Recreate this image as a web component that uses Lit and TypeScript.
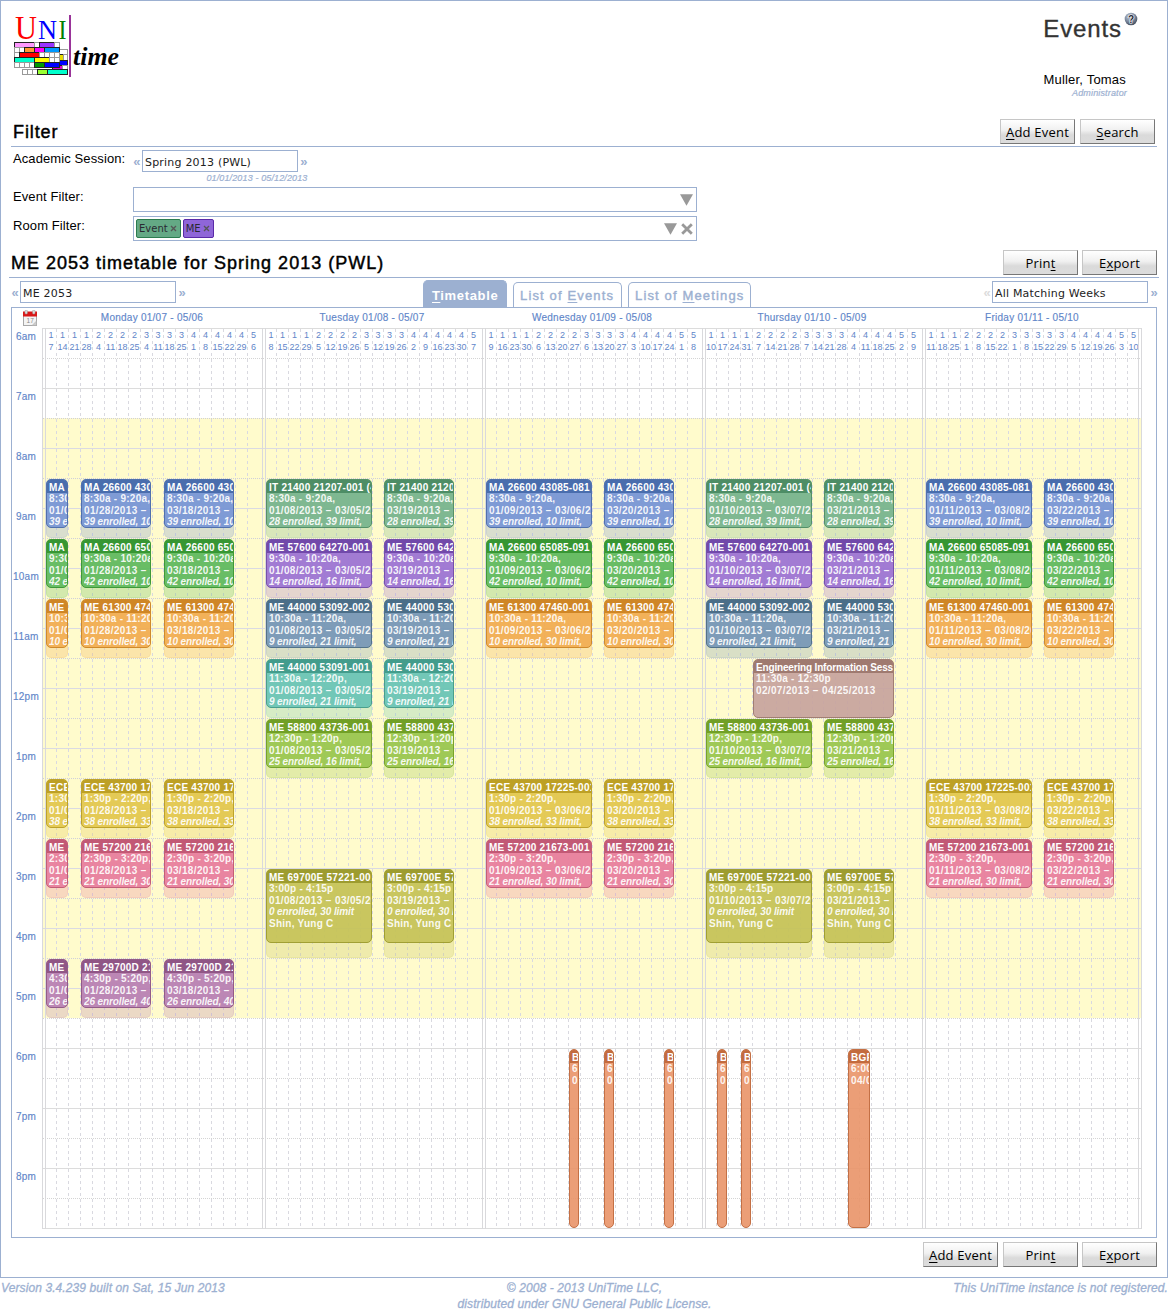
import { LitElement, html, svg, css, nothing } from "lit";
import { customElement, property } from "lit/decorators.js";

type Rgb = [number, number, number];
interface Tone { body: string; head: string; }
interface Course {
  title: string;
  tone: keyof typeof TONES;
  start: number;
  length: number;
  rest: number;
  time: string;
  seats?: string;
  person?: string;
  days: string;
}
interface Block {
  title: string;
  tone: keyof typeof TONES;
  start: number;
  length: number;
  rest: number;
  week: number;
  weeks: number;
  time: string;
  range: string;
  seats?: string;
  person?: string;
  prose?: boolean;
}

const TONES = {
  blue: { body: "#829dd5", head: "#5071ad" },
  green: { body: "#6dbf68", head: "#3f9938" },
  orange: { body: "#f2b35c", head: "#cf8a2c" },
  sage: { body: "#82ba93", head: "#549068" },
  purple: { body: "#a47fd3", head: "#7650aa" },
  slate: { body: "#819fb8", head: "#527389" },
  teal: { body: "#76c9b7", head: "#4a9f8c" },
  lime: { body: "#a1ca5a", head: "#76a22c" },
  gold: { body: "#e4cb5a", head: "#bda22b" },
  pink: { body: "#e989a1", head: "#c35e77" },
  olive: { body: "#cac862", head: "#a09f34" },
  mauve: { body: "#be8ab5", head: "#935b88" },
  brown: { body: "#cbaaa1", head: "#a17e73" },
  coral: { body: "#eb9f77", head: "#c47045" },
} satisfies Record<string, Tone>;

const WORK_HOURS: Rgb = [255, 251, 204];
const OFF_HOURS: Rgb = [255, 255, 255];

const rgb = (hex: string): Rgb => [1, 3, 5].map((i) => parseInt(hex.slice(i, i + 2), 16)) as Rgb;

/** Translucent colour that reads as `hex` once it is laid over `base`. */
function over(hex: string, alpha: number, base: Rgb): string {
  const c = rgb(hex).map((v, i) => Math.max(0, Math.min(255, Math.round((v - (1 - alpha) * base[i]) / alpha))));
  return `rgba(${c.join(",")},${alpha})`;
}

const DAYS = ["Monday", "Tuesday", "Wednesday", "Thursday", "Friday"];
const CODES = "MTWRF";
const WEEKS = 18;

const dateOf = (day: number, week: number) => new Date(2013, 0, 7 + day + week * 7);
const two = (n: number) => String(n).padStart(2, "0");
const short = (d: Date) => `${two(d.getMonth() + 1)}/${two(d.getDate())}`;
const long = (d: Date) => `${short(d)}/${d.getFullYear()}`;

const at = (h: number, m = 0) => (h - 6) * 60 + m;

const COURSES: Course[] = [
  { title: "MA 26600 43085-081", tone: "blue", start: at(8, 30), length: 50, rest: 10, time: "8:30a - 9:20a,", seats: "39 enrolled, 10 limit,", days: "MWF" },
  { title: "MA 26600 65085-091", tone: "green", start: at(9, 30), length: 50, rest: 10, time: "9:30a - 10:20a,", seats: "42 enrolled, 10 limit,", days: "MWF" },
  { title: "ME 61300 47460-001", tone: "orange", start: at(10, 30), length: 50, rest: 10, time: "10:30a - 11:20a,", seats: "10 enrolled, 30 limit,", days: "MWF" },
  { title: "IT 21400 21207-001 (4)", tone: "sage", start: at(8, 30), length: 50, rest: 10, time: "8:30a - 9:20a,", seats: "28 enrolled, 39 limit,", days: "TR" },
  { title: "ME 57600 64270-001", tone: "purple", start: at(9, 30), length: 50, rest: 10, time: "9:30a - 10:20a,", seats: "14 enrolled, 16 limit,", days: "TR" },
  { title: "ME 44000 53092-002", tone: "slate", start: at(10, 30), length: 50, rest: 10, time: "10:30a - 11:20a,", seats: "9 enrolled, 21 limit,", days: "TR" },
  { title: "ME 44000 53091-001", tone: "teal", start: at(11, 30), length: 50, rest: 10, time: "11:30a - 12:20p,", seats: "9 enrolled, 21 limit,", days: "T" },
  { title: "ME 58800 43736-001", tone: "lime", start: at(12, 30), length: 50, rest: 10, time: "12:30p - 1:20p,", seats: "25 enrolled, 16 limit,", days: "TR" },
  { title: "ECE 43700 17225-001", tone: "gold", start: at(13, 30), length: 50, rest: 10, time: "1:30p - 2:20p,", seats: "38 enrolled, 33 limit,", days: "MWF" },
  { title: "ME 57200 21673-001", tone: "pink", start: at(14, 30), length: 50, rest: 10, time: "2:30p - 3:20p,", seats: "21 enrolled, 30 limit,", days: "MWF" },
  { title: "ME 69700E 57221-001", tone: "olive", start: at(15), length: 75, rest: 15, time: "3:00p - 4:15p", seats: "0 enrolled, 30 limit", person: "Shin, Yung C", days: "TR" },
  { title: "ME 29700D 21640-001", tone: "mauve", start: at(16, 30), length: 50, rest: 10, time: "4:30p - 5:20p,", seats: "26 enrolled, 40 limit,", days: "M" },
];

function blocksFor(day: number): Block[] {
  const spans = day === 0 ? [[0, 2], [3, 6], [10, 6]] : [[0, 9], [10, 6]];
  const out: Block[] = [];
  for (const c of COURSES) {
    if (!c.days.includes(CODES[day])) continue;
    for (const [week, weeks] of spans) {
      const range = `${long(dateOf(day, week))} − ${long(dateOf(day, week + weeks - 1))}`;
      out.push({ ...c, week, weeks, range });
    }
  }
  if (day === 3) {
    out.push({ title: "Engineering Information Session", tone: "brown", start: at(11, 30), length: 60, rest: 0, week: 4, weeks: 12, time: "11:30a - 12:30p", range: "02/07/2013 − 04/25/2013", prose: true });
  }
  const evenings: Record<number, number[][]> = { 2: [[7, 1], [10, 1], [15, 1]], 3: [[1, 1], [3, 1], [12, 2]] };
  for (const [week, weeks] of evenings[day] ?? []) {
    out.push({ title: "BGR", tone: "coral", start: at(18), length: 180, rest: 0, week, weeks, time: "6:00p", range: long(dateOf(day, week)) });
  }
  return out;
}

@customElement("unitime-logo")
class UnitimeLogo extends LitElement {
  static styles = css`
    :host { display: block; width: 110px; height: 66px; margin-top: 1px; }
    svg { display: block; }
    .serif { font-family: "Liberation Serif", serif; }
    .script { font-family: "Liberation Serif", serif; font-style: italic; font-weight: bold; font-size: 25px; }
  `;
  render() {
    const back: [number, number, number, number, string][] = [
      [45, 34, 8, 5, "#fff"], [45, 39, 4, 6, "#e8dc00"], [49, 39, 4, 6, "#fff"], [45, 45, 8, 5, "#0000ff"],
      [38, 50, 10, 5, "#e800c8"], [48, 50, 5, 5, "#fff"],
      [8, 54, 5, 5, "#fff"], [13, 54, 5, 5, "#fff"], [18, 54, 5, 5, "#fff"], [23, 54, 10, 5, "#99ff33"], [33, 54, 20, 5, "#00ffcc"],
    ];
    const front: [number, number, number, number, string][] = [
      [0, 27, 20, 5, "#ff99ff"], [20, 27, 5, 5, "#fff"], [25, 27, 15, 5, "#9933ff"], [40, 27, 5, 5, "#fff"],
      [0, 32, 5, 5, "#fff"], [5, 32, 5, 5, "#fff"], [10, 32, 10, 5, "#ff9933"], [20, 32, 10, 5, "#ff00ff"], [30, 32, 15, 5, "#0099ff"],
      [0, 37, 5, 5, "#fff"], [5, 37, 20, 5, "#ff0000"], [25, 37, 5, 5, "#fff"], [30, 37, 5, 5, "#fff"], [35, 37, 5, 5, "#fff"], [40, 37, 5, 5, "#fff"],
      [0, 42, 20, 5, "#00ffcc"], [20, 42, 15, 5, "#ffff00"], [35, 42, 5, 5, "#fff"], [40, 42, 5, 5, "#fff"],
      [0, 47, 5, 5, "#fff"], [5, 47, 5, 5, "#fff"], [10, 47, 5, 5, "#fff"], [15, 47, 5, 5, "#fff"], [20, 47, 10, 5, "#009900"], [30, 47, 15, 5, "#0000ff"],
    ];
    const cell = ([x, y, w, h, fill]: [number, number, number, number, string]) =>
      svg`<rect x=${x + 0.5} y=${y + 0.5} width=${w} height=${h} fill=${fill} stroke=${fill === "#fff" ? "#999" : "#222"} stroke-width="1" />`;
    return html`<svg width="110" height="66" viewBox="0 0 110 66">
      <text class="serif" x="1" y="24" font-size="34" textLength="22" lengthAdjust="spacingAndGlyphs" fill="#ff0000">U</text>
      <text class="serif" x="24" y="24" font-size="27" textLength="19" lengthAdjust="spacingAndGlyphs" fill="#0000ff">N</text>
      <text class="serif" x="44.5" y="24" font-size="27" textLength="8" lengthAdjust="spacingAndGlyphs" fill="#008000">I</text>
      ${back.map(cell)}
      ${svg`<rect x="0.5" y="27.5" width="45" height="25" fill="#fff" />`}
      ${front.map(cell)}
      <rect x="55" y="0" width="2" height="62" fill="#993399" />
      <text class="script" x="59" y="50" textLength="46" lengthAdjust="spacingAndGlyphs">time</text>
    </svg>`;
  }
}

@customElement("push-button")
class PushButton extends LitElement {
  @property() label = "";
  @property({ attribute: "access-key" }) key = "";
  static styles = css`
    :host { display: block; }
    .button {
      box-sizing: border-box; width: 75px; height: 25px; padding: 0; display: block;
      border: 1px solid; border-color: #c6c6c6 #777 #777 #c6c6c6;
      background: linear-gradient(#ffffff, #f0f0f0 45%, #dadada 65%, #dcdcdc);
      font: 13px/24px "Open Sans", sans-serif; letter-spacing: 0.2px; color: #000; text-align: center; white-space: nowrap;
    }
    .key { text-decoration: underline; text-underline-offset: 2px; }
  `;
  render() {
    const i = this.label.indexOf(this.key);
    return html`<button class="button">${this.label.slice(0, i)}<span class="key">${this.key}</span>${this.label.slice(i + this.key.length)}</button>`;
  }
}

@customElement("step-select")
class StepSelect extends LitElement {
  @property() value = "";
  @property({ type: Boolean }) first = false;
  static styles = css`
    :host { display: flex; align-items: center; height: 22px; font-family: "Liberation Sans", sans-serif; }
    .step { width: 8px; padding-top: 2px; color: #9cb0d1; font: bold 13px/20px "Liberation Sans", sans-serif; text-align: center; }
    .step.off { color: #dcdcdc; }
    .field {
      box-sizing: border-box; width: 156px; height: 22px; margin: 0 2px 0 1px; padding-left: 2px; border: 1px solid #9cb0d1;
      font: 11px/23px "DejaVu Sans", sans-serif; letter-spacing: 0.2px; color: #222; white-space: nowrap;
    }
  `;
  render() {
    return html`<span class="step ${this.first ? "off" : ""}">«</span>
      <div class="field">${this.value}</div>
      <span class="step">»</span>`;
  }
}

@customElement("event-block")
class EventBlock extends LitElement {
  @property({ attribute: false }) block!: Block;
  static styles = css`
    :host { display: block; min-width: 0; min-height: 0; height: 100%; }
    .slot { box-sizing: border-box; height: 100%; border-radius: 5px; }
    .event {
      box-sizing: border-box; border: 1px solid; border-radius: 5px; overflow: hidden;
      font: bold 10px/11.6px "Liberation Sans", sans-serif; letter-spacing: 0.25px; color: rgba(255, 255, 255, 0.92); white-space: nowrap;
    }
    .title { height: 13px; line-height: 15px; padding-left: 2px; overflow: hidden; color: #fff; }
    .title.prose { letter-spacing: -0.17px; }
    .text { margin-left: 2px; overflow: hidden; }
    .range { letter-spacing: 0.35px; }
    .seats { font-style: italic; letter-spacing: -0.12px; }
  `;
  render() {
    const b = this.block;
    const tone = TONES[b.tone];
    const base = b.start >= at(17, 30) ? OFF_HOURS : WORK_HOURS;
    const [r, g, bl] = rgb(tone.body);
    const shade = b.rest ? `background:rgba(${r},${g},${bl},.3);box-shadow:inset 0 0 0 1px rgba(${r},${g},${bl},.16)` : "";
    const head = over(tone.head, 0.95, base);
    return html`<div class="slot" style=${shade}>
      <div class="event" style="height:${b.length - 1}px;border-color:${tone.head};background:${over(tone.body, 0.9, base)}">
        <div class="title ${b.prose ? "prose" : ""}" style="background:${head}">${b.title}</div>
        <div class="text">${b.time}</div>
        <div class="text range">${b.range}</div>
        ${b.seats ? html`<div class="text seats">${b.seats}</div>` : nothing}
        ${b.person ? html`<div class="text">${b.person}</div>` : nothing}
      </div>
    </div>`;
  }
}

@customElement("week-timetable")
class WeekTimetable extends LitElement {
  static styles = css`
    :host {
      display: block; box-sizing: border-box; height: 931px; border: 1px solid #9cb0d1;
      font: 10px/12px "Liberation Sans", sans-serif; letter-spacing: 0.25px; color: #5f86c9;
    }
    .days { display: grid; grid-template-columns: 30px repeat(5, 220px); height: 20px; line-height: 19px; text-align: center; -webkit-text-stroke: 0.15px #5f86c9; }
    .calendar { display: block; margin: 2px 0 0 10px; }
    .body { display: grid; grid-template-columns: 30px 1100px; }
    .hours { text-align: center; line-height: 17px; -webkit-text-stroke: 0.15px #5f86c9; }
    .hour { height: 60px; padding-right: 2px; }
    .board { display: grid; width: 1100px; height: 901px; }
    .rows, .columns { grid-area: 1 / 1; }
    .row { box-sizing: border-box; height: 30px; border-top: 1px solid #dcdcdc; }
    .row.half { border-top-style: dotted; border-top-color: #d4d4d4; }
    .row.work { background: #fffbcc; background-clip: padding-box; border-top-color: #dadae2; }
    .row.work.half { border-top-color: #cfcfda; background-clip: border-box; }
    .row.end { height: 1px; }
    .columns { display: grid; grid-template-columns: repeat(4, 220px) 216px 4px; }
    .day {
      display: grid; box-sizing: border-box; padding: 1px 0 0 2px; border-left: 1px solid #d9d9dc;
      grid-template-columns: 1px 11px repeat(8, 12px) 11px repeat(7, 12px) 1fr; grid-template-rows: repeat(180, 5px);
    }
    .week {
      grid-row: 1 / -1; box-sizing: border-box; padding-right: 1px; font-size: 9px; letter-spacing: 0;
      display: flex; flex-direction: column; align-items: center; text-align: center;
      background: repeating-linear-gradient(#d9d9e0 0 3px, transparent 3px 6px) right / 1px 100% no-repeat;
    }
    .week.last { background: none; width: 12px; padding-right: 1px; }
    .edge { grid-row: 1 / -1; grid-column: 1; width: 1px; margin-top: -1px; background: #d9d9dc; }
    .close { box-sizing: border-box; border: solid #d9d9dc; border-width: 0 1px; }
    .place { min-width: 0; min-height: 0; margin-bottom: 1px; }
  `;

  private day(index: number) {
    const weeks = Array.from({ length: WEEKS }, (_, w) => dateOf(index, w));
    const trim = (b: Block) => ([0, 9].some((x) => x >= b.week && x < b.week + b.weeks) ? 1 : 2);
    return html`<div class="day">
      <div class="edge"></div>
      ${weeks.map((d, w) => html`<div class="week ${w === WEEKS - 1 ? "last" : ""}" style="grid-column:${w + 2}">
        <span>${d.getMonth() + 1}</span><span>${d.getDate()}</span>
      </div>`)}
      ${blocksFor(index).map((b) => html`<div class="place" style="grid-column:${b.week + 2} / span ${b.weeks};grid-row:${b.start / 5 + 1} / span ${(b.length + b.rest) / 5};margin-right:${b.prose ? 2 : trim(b)}px">
        <event-block .block=${b}></event-block>
      </div>`)}
    </div>`;
  }

  render() {
    const names = ["6am", "7am", "8am", "9am", "10am", "11am", "12pm", "1pm", "2pm", "3pm", "4pm", "5pm", "6pm", "7pm", "8pm"];
    const rows = Array.from({ length: 30 }, (_, i) => i);
    return html`
      <div class="days">
        <svg class="calendar" width="16" height="17" viewBox="0 0 16 17">
          <rect x="1.5" y="2.5" width="13" height="13" fill="#f4f4f4" stroke="#a8a8a8" />
          <rect x="1" y="1.5" width="14" height="5" fill="#d81818" />
          <rect x="3" y="0" width="2.4" height="4" rx="1" fill="#ddd" stroke="#999" stroke-width=".5" />
          <rect x="10.6" y="0" width="2.4" height="4" rx="1" fill="#ddd" stroke="#999" stroke-width=".5" />
          <text x="4.6" y="13" font-size="6.5" letter-spacing="0" fill="#888">17</text>
          <path d="M10 15.5l4.5-4.5v4.5z" fill="#ccc" stroke="#aaa" stroke-width=".5" />
        </svg>
        ${DAYS.map((n, i) => html`<div>${n} ${short(dateOf(i, 0))} - ${short(dateOf(i, WEEKS - 1))}</div>`)}
      </div>
      <div class="body">
        <div class="hours">${names.map((n) => html`<div class="hour">${n}</div>`)}</div>
        <div class="board">
          <div class="rows">
            ${rows.map((i) => html`<div class="row ${i % 2 ? "half" : ""} ${i >= 3 && i < 23 ? "work" : ""}"></div>`)}
            <div class="row end"></div>
          </div>
          <div class="columns">
            ${DAYS.map((_, i) => this.day(i))}
            <div class="close"></div>
          </div>
        </div>
      </div>`;
  }
}

@customElement("app-root")
class AppRoot extends LitElement {
  static styles = css`
    :host { display: block; width: 1168px; height: 1312px; background: #fff; overflow: hidden; font-family: "Liberation Sans", sans-serif; color: #000; }
    .page { box-sizing: border-box; height: 1278px; border: 1px solid #9cb0d1; }
    .top { display: flex; justify-content: space-between; height: 118px; padding: 13px 29px 0 13px; box-sizing: border-box; }
    .account { display: flex; flex-direction: column; align-items: flex-end; }
    .name { display: flex; height: 58px; font-size: 24px; line-height: 30px; letter-spacing: 0.9px; color: #333; -webkit-text-stroke: 0.35px #333; }
    .help { display: block; margin: -2px 0 0 2px; }
    .user { margin-right: 12px; font-size: 13px; line-height: 15px; letter-spacing: 0.2px; }
    .role { margin-right: 11px; font-size: 9px; line-height: 13px; letter-spacing: 0.15px; font-style: italic; color: #9cb0d1; -webkit-text-stroke: 0.2px #9cb0d1; }
    .bar { display: flex; justify-content: space-between; box-sizing: border-box; height: 28px; border-bottom: 1px solid #9cb0d1; }
    .bar.filter { margin: 0 10px; padding: 0 2px; }
    .bar.result { margin: 9px 8px 0; padding: 0 2px; }
    .heading { font-size: 18px; line-height: 26px; letter-spacing: 1px; -webkit-text-stroke: 0.45px #000; }
    .filter .heading { letter-spacing: 0.9px; }
    .buttons { display: flex; gap: 5px; }
    .result .buttons { gap: 4px; }
    .form { display: grid; grid-template-columns: 120px 564px; grid-template-rows: 36px 25px 25px; row-gap: 4px; padding-left: 12px; font-size: 13px; line-height: 16px; letter-spacing: 0.1px; }
    .caption { padding-top: 2px; }
    .caption.first { padding-top: 4px; }
    .session { padding-top: 3px; }
    .dates { width: 174.5px; padding-top: 1px; text-align: right; font-size: 9px; line-height: 11px; font-style: italic; letter-spacing: 0.13px; color: #9cb0d1; -webkit-text-stroke: 0.2px #9cb0d1; }
    .search { display: flex; align-items: center; gap: 2px; box-sizing: border-box; border: 1px solid #9cb0d1; padding: 0 3px 0 2px; }
    .chip { display: flex; gap: 2px; align-items: center; box-sizing: border-box; height: 19px; padding: 0 3px 0 2px; border: 1px solid; border-radius: 2px; font: 10px/18px "DejaVu Sans", sans-serif; letter-spacing: 0; color: #2a2a33; }
    .chip svg { display: block; }
    .chip.type { background: #64a985; border-color: #2c7c4f; }
    .chip.dept { background: #8f66d8; border-color: #5a2aa8; }
    .icons { display: flex; gap: 4px; margin-left: auto; }
    .icons svg { display: block; }
    .tools { display: flex; height: 29px; margin: 0 9px 0 10px; }
    .tools step-select { margin-top: 3px; }
    .tools .weeks { margin-left: auto; }
    .tabs { display: flex; align-items: flex-end; margin-left: 237px; height: 29px; font-size: 13px; line-height: 26px; letter-spacing: 1.15px; color: #9cb0d1; -webkit-text-stroke: 0.4px #9cb0d1; }
    .tab { box-sizing: border-box; height: 25px; padding-left: 6px; border: 1px solid #9cb0d1; border-bottom: 0; border-radius: 5px 5px 0 0; white-space: nowrap; }
    .tab.active { width: 84px; height: 27px; padding-left: 8px; margin-right: 6px; line-height: 30px; background: #9cb0d1; color: #fff; font-weight: bold; letter-spacing: 0.65px; -webkit-text-stroke: 0; }
    .tab.events { width: 109px; margin-right: 6px; }
    .tab.meetings { width: 123px; }
    u { text-underline-offset: 2px; text-decoration-thickness: 1px; }
    .grid { margin: 0 10px; }
    .bottom { display: flex; justify-content: flex-end; gap: 4px; padding: 4px 10px 0 0; }
    .bottom .gap { margin-right: 1px; }
    .footer { display: grid; grid-template-columns: 1fr auto 1fr; padding: 2px 0 0 1px; font-size: 12px; line-height: 16px; letter-spacing: 0.1px; font-style: italic; color: #9cb0d1; -webkit-text-stroke: 0.3px #9cb0d1; }
    .center { text-align: center; }
    .right { text-align: right; }
  `;

  private arrow() {
    return html`<svg width="13" height="12" viewBox="0 0 13 12"><path d="M0 .3h13L6.5 11.8z" fill="#999" /></svg>`;
  }
  private times() {
    return html`<svg width="7" height="7" viewBox="0 0 7 7"><path d="M1 1l5 5M6 1l-5 5" stroke="#555" stroke-width="1.3" /></svg>`;
  }

  render() {
    return html`
      <div class="page">
        <div class="top">
          <unitime-logo></unitime-logo>
          <div class="account">
            <div class="name">Events
              <svg class="help" width="14" height="14" viewBox="0 0 14 14">
                <defs><radialGradient id="ball" cx=".4" cy=".3" r=".75"><stop offset="0" stop-color="#c3ccd8" /><stop offset=".55" stop-color="#7d8ba0" /><stop offset="1" stop-color="#3c4655" /></radialGradient></defs>
                <circle cx="7" cy="7" r="6.3" fill="url(#ball)" />
                <text x="7" y="10.6" text-anchor="middle" font-size="10" font-weight="bold" letter-spacing="0" fill="#1c2634" stroke="#fff" stroke-width="1.2" paint-order="stroke">?</text>
              </svg>
            </div>
            <div class="user">Muller, Tomas</div>
            <div class="role">Administrator</div>
          </div>
        </div>

        <div class="bar filter">
          <div class="heading">Filter</div>
          <div class="buttons">
            <push-button label="Add Event" access-key="A"></push-button>
            <push-button label="Search" access-key="S"></push-button>
          </div>
        </div>

        <div class="form">
          <div class="caption first">Academic Session:</div>
          <div class="session">
            <step-select value="Spring 2013 (PWL)"></step-select>
            <div class="dates">01/01/2013 - 05/12/2013</div>
          </div>
          <div class="caption">Event Filter:</div>
          <div class="search"><div class="icons">${this.arrow()}</div></div>
          <div class="caption">Room Filter:</div>
          <div class="search">
            <div class="chip type">Event${this.times()}</div>
            <div class="chip dept">ME${this.times()}</div>
            <div class="icons">${this.arrow()}
              <svg width="12" height="12" viewBox="0 0 12 12"><path d="M1.2 1.2l9.6 9.6M10.8 1.2l-9.6 9.6" stroke="#999" stroke-width="2.8" /></svg>
            </div>
          </div>
        </div>

        <div class="bar result">
          <div class="heading">ME 2053 timetable for Spring 2013 (PWL)</div>
          <div class="buttons">
            <push-button label="Print" access-key="t"></push-button>
            <push-button label="Export" access-key="x"></push-button>
          </div>
        </div>

        <div class="tools">
          <step-select value="ME 2053"></step-select>
          <div class="tabs">
            <div class="tab active"><u>T</u>imetable</div>
            <div class="tab events">List of <u>E</u>vents</div>
            <div class="tab meetings">List of <u>M</u>eetings</div>
          </div>
          <step-select class="weeks" value="All Matching Weeks" first></step-select>
        </div>

        <week-timetable class="grid"></week-timetable>

        <div class="bottom">
          <push-button class="gap" label="Add Event" access-key="A"></push-button>
          <push-button label="Print" access-key="t"></push-button>
          <push-button label="Export" access-key="x"></push-button>
        </div>
      </div>
      <div class="footer">
        <div>Version 3.4.239 built on Sat, 15 Jun 2013</div>
        <div class="center">© 2008 - 2013 UniTime LLC,<br />distributed under GNU General Public License.</div>
        <div class="right">This UniTime instance is not registered.</div>
      </div>`;
  }
}
